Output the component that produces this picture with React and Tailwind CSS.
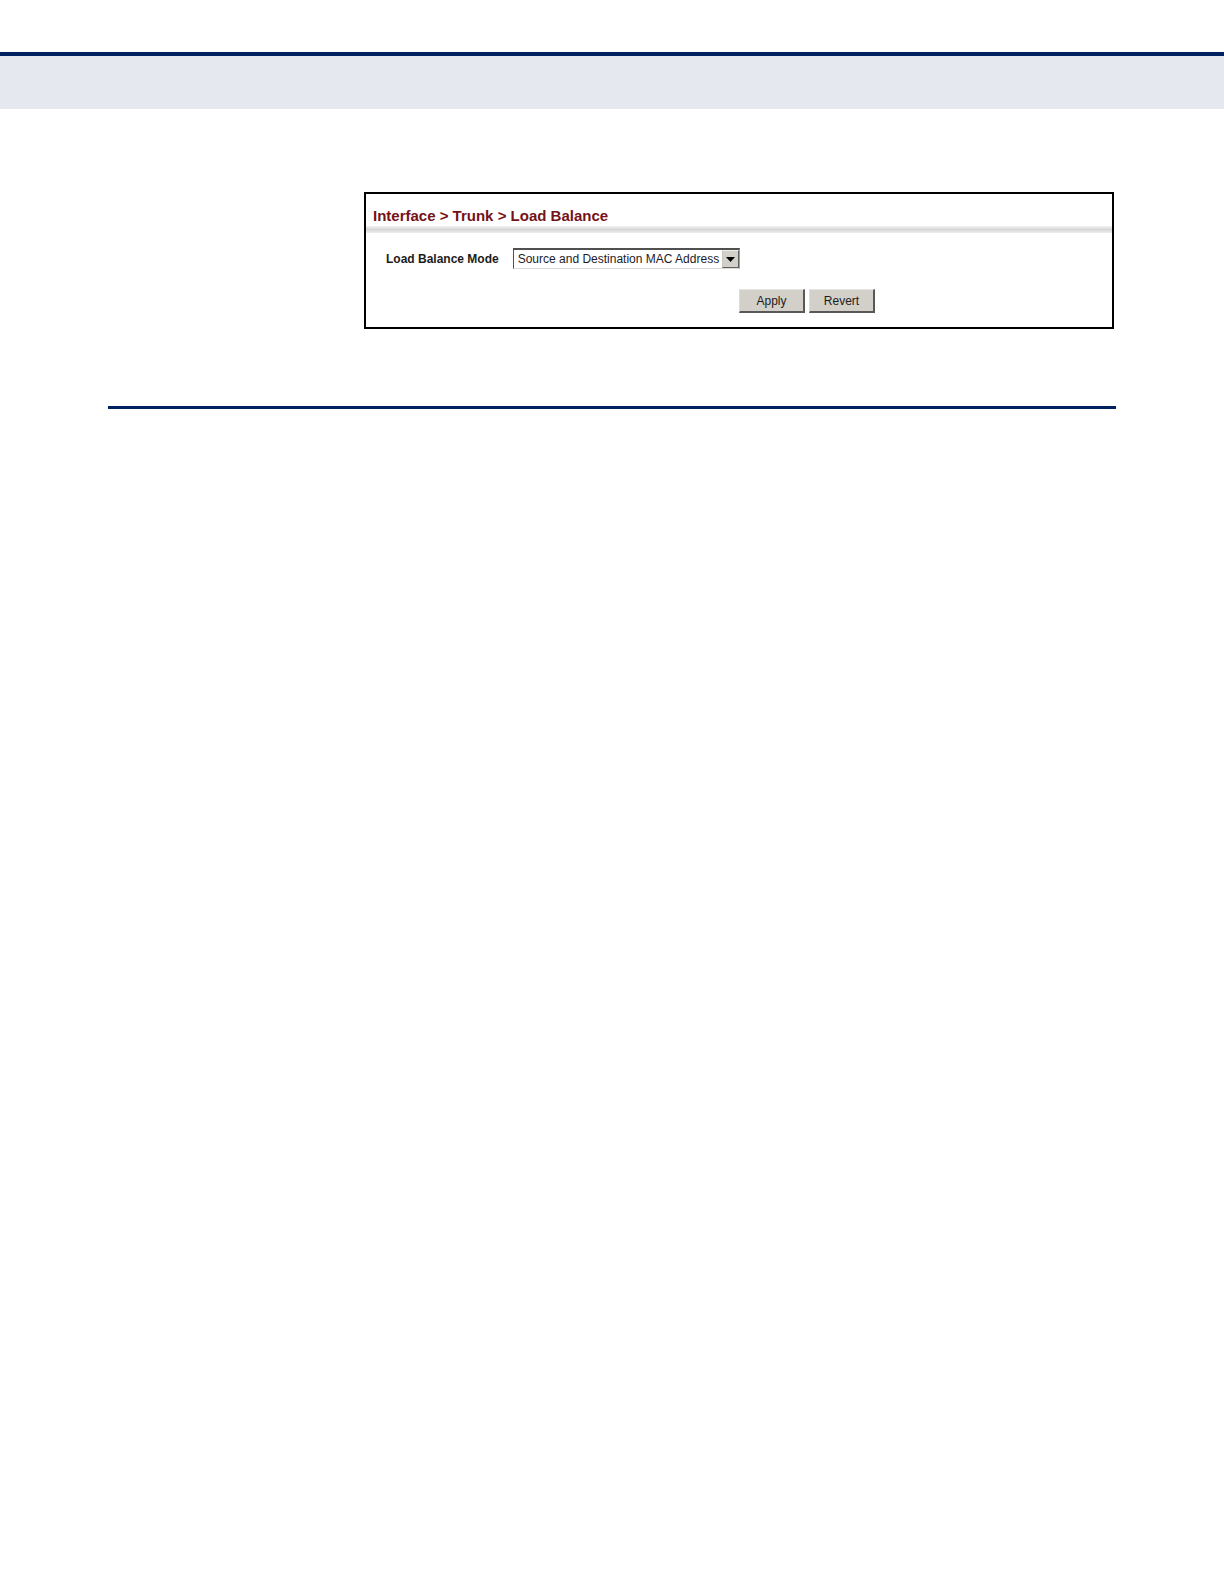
import { useState } from "react";

const MODES = [
  "Source and Destination MAC Address",
  "Source and Destination IP Address",
  "Destination IP Address",
  "Destination MAC Address",
  "Source IP Address",
  "Source MAC Address",
];

function ModeSelect({ id, value, onChange }) {
  return (
    <div className="relative ml-3.5 h-[21px] w-[227px]">
      <select
        id={id}
        value={value}
        onChange={(e) => onChange(e.target.value)}
        className="block h-full w-full appearance-none rounded-none border border-t-2 border-t-[#505050] border-r-[#a0a0a0] border-b-[#dcdad5] border-l-[#505050] bg-white pr-[18px] pl-1 text-[12px] leading-4 text-[#1c1c28]"
      >
        {MODES.map((m) => (
          <option key={m}>{m}</option>
        ))}
      </select>
      <span className="pointer-events-none absolute top-[2px] right-px flex h-[18px] w-[17px] items-center justify-center border border-t-[#f0eeea] border-r-[#606060] border-b-[#606060] border-l-[#c8c6c0] bg-[#d2d0c9]">
        <svg width="9" height="5" viewBox="0 0 9 5" aria-hidden="true">
          <path d="M0 0h9L4.5 5z" fill="#000" />
        </svg>
      </span>
    </div>
  );
}

function PanelButton({ children, onClick }) {
  return (
    <button
      type="button"
      onClick={onClick}
      className="h-6 w-[66px] border-t border-r-2 border-b-2 border-l border-t-[#e6e4df] border-r-[#585858] border-b-[#585858] border-l-[#dedcd6] bg-[#d2d0c9] text-[12px] leading-5 text-[#1c1c1c]"
    >
      {children}
    </button>
  );
}

export default function App() {
  const [mode, setMode] = useState(MODES[0]);
  return (
    <div className="min-h-screen bg-white pt-[52px] font-['Liberation_Sans',Arial,sans-serif]">
      <header className="h-[57px] border-t-4 border-[#00215f] bg-[#e5e8ef]" />
      <main className="mx-[108px] border-b-3 border-[#00215f] pt-[83px] pb-[77px]">
        <section className="mr-[2px] ml-64 border-2 border-black bg-white pb-[14px]">
          <h1 className="pt-3 pl-[7px] text-[15px] leading-5 font-bold text-[#741218]">
            Interface &gt; Trunk &gt; Load Balance
          </h1>
          <div className="h-[7px] bg-linear-to-b from-[#f4f4f4] via-[#d6d6d6] to-[#eeeeee]" />
          <form onSubmit={(e) => e.preventDefault()}>
            <div className="flex items-center pt-[15px] pl-5">
              <label htmlFor="mode" className="text-[12px] font-bold text-[#1c1c1c]">
                Load Balance Mode
              </label>
              <ModeSelect id="mode" value={mode} onChange={setMode} />
            </div>
            <div className="flex gap-1 pt-5 pl-[50%]">
              <PanelButton>Apply</PanelButton>
              <PanelButton onClick={() => setMode(MODES[0])}>Revert</PanelButton>
            </div>
          </form>
        </section>
      </main>
    </div>
  );
}
